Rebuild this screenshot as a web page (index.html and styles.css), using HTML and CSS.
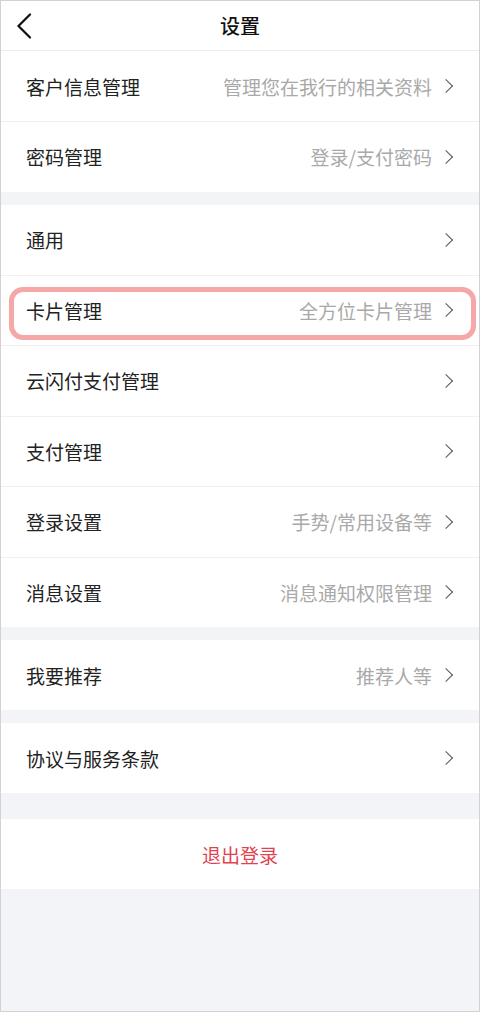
FILE: index.html
```html
<!DOCTYPE html>
<html lang="zh-CN">
<head>
<meta charset="utf-8">
<title>设置</title>
<link rel="stylesheet" href="styles.css">
</head>
<body>
<div class="frame">
  <header class="topbar">
    <span class="back">
      <svg width="16" height="26" viewBox="0 0 16 26"><polyline points="14,1.5 2.5,13 14,24.5" fill="none" stroke="#111" stroke-width="2.2" stroke-linecap="round" stroke-linejoin="miter"/></svg>
    </span>
    <h1 class="title">设置</h1>
  </header>

  <section class="group">
    <div class="row"><span class="label">客户信息管理</span><span class="value">管理您在我行的相关资料</span><i class="chev"></i></div>
    <div class="row"><span class="label">密码管理</span><span class="value">登录/支付密码</span><i class="chev"></i></div>
  </section>

  <section class="group">
    <div class="row"><span class="label">通用</span><span class="value"></span><i class="chev"></i></div>
    <div class="row hl"><span class="label">卡片管理</span><span class="value">全方位卡片管理</span><i class="chev"></i><span class="mark"></span></div>
    <div class="row"><span class="label">云闪付支付管理</span><span class="value"></span><i class="chev"></i></div>
    <div class="row"><span class="label">支付管理</span><span class="value"></span><i class="chev"></i></div>
    <div class="row"><span class="label">登录设置</span><span class="value">手势/常用设备等</span><i class="chev"></i></div>
    <div class="row"><span class="label">消息设置</span><span class="value">消息通知权限管理</span><i class="chev"></i></div>
  </section>

  <section class="group">
    <div class="row"><span class="label">我要推荐</span><span class="value">推荐人等</span><i class="chev"></i></div>
  </section>

  <section class="group terms">
    <div class="row"><span class="label">协议与服务条款</span><span class="value"></span><i class="chev"></i></div>
  </section>

  <section class="group logout-group">
    <div class="logout">退出登录</div>
  </section>
</div>
</body>
</html>
```

FILE: styles.css
```css
* { box-sizing: border-box; }
html, body { margin: 0; padding: 0; }
body {
  font-family: "Noto Sans CJK SC", "Noto Sans", sans-serif;
  background: #f3f4f8;
}
.frame {
  width: 480px;
  height: 1012px;
  border: 1px solid #d4d0d4;
  background: #f3f4f8;
  overflow: hidden;
}
.topbar {
  height: 50px;
  background: #fff;
  border-bottom: 1px solid #ececec;
  display: flex;
  align-items: center;
  justify-content: center;
  position: relative;
}
.back {
  position: absolute;
  left: 15px;
  top: 12px;
  width: 16px;
  height: 26px;
}
.back svg { display: block; }
.title {
  margin: 0;
  font-size: 20px;
  font-weight: 500;
  color: #111;
  line-height: 1;
}
.group {
  background: #fff;
  margin-bottom: 13px;
}
.row {
  height: 70.5px;
  display: flex;
  align-items: center;
  padding: 0 25px 0 25px;
  border-top: 1px solid #f0f0f0;
  position: relative;
}
.row:first-child { border-top: none; height: 70px; }
.label {
  font-size: 19px;
  color: #222;
  flex: 1;
}
.value {
  font-size: 19px;
  color: #a9a9a9;
  margin-right: 9px;
}
.chev {
  width: 10px;
  height: 10px;
  border-top: 1.6px solid #555;
  border-right: 1.6px solid #555;
  transform: rotate(45deg);
  margin-right: 3px;
}
.mark {
  position: absolute;
  left: 8px;
  right: 3px;
  top: 11px;
  bottom: 5px;
  border: 5px solid #f6a7a7;
  border-radius: 14px;
  pointer-events: none;
}
.terms { margin-bottom: 26px; }
.logout-group { margin-bottom: 0; }
.logout {
  height: 70px;
  display: flex;
  align-items: center;
  justify-content: center;
  font-size: 19px;
  color: #e2424f;
}
```
